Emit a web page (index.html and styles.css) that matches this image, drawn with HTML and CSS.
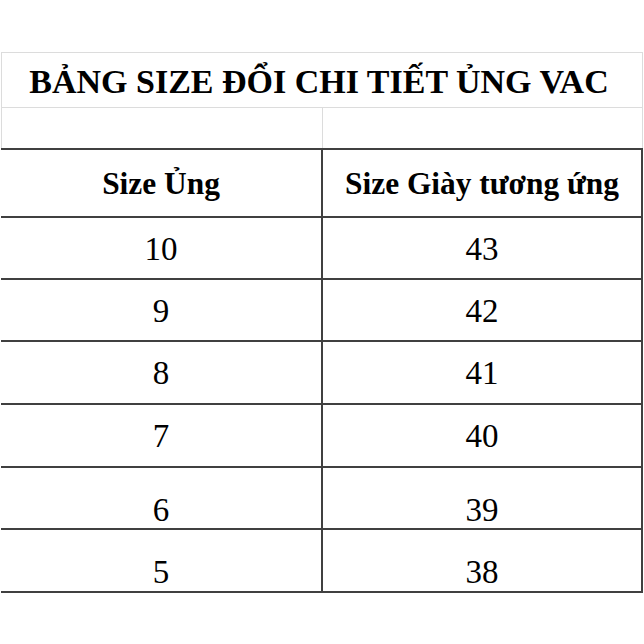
FILE: index.html
```html
<!DOCTYPE html>
<html lang="vi">
<head>
<meta charset="utf-8">
<title>Bảng size đổi chi tiết ủng VAC</title>
<link rel="stylesheet" href="styles.css">
</head>
<body>
<div class="sheet">
  <div class="title">BẢNG SIZE ĐỔI CHI TIẾT ỦNG VAC</div>
  <div class="blank"><div class="blank-cell"></div><div></div></div>
  <div class="row head h68"><div class="cell">Size Ủng</div><div class="cell">Size Giày tương ứng</div></div>
  <div class="row h62"><div class="cell">10</div><div class="cell">43</div></div>
  <div class="row h62"><div class="cell">9</div><div class="cell">42</div></div>
  <div class="row h63"><div class="cell">8</div><div class="cell">41</div></div>
  <div class="row h63"><div class="cell">7</div><div class="cell">40</div></div>
  <div class="row h62 low"><div class="cell">6</div><div class="cell">39</div></div>
  <div class="row h63 low last"><div class="cell">5</div><div class="cell">38</div></div>
</div>
</body>
</html>
```

FILE: styles.css
```css
* { box-sizing: border-box; }
html, body { margin: 0; padding: 0; background: #fff; }
body {
  font-family: "Liberation Serif", "Times New Roman", serif;
  color: #000;
  height: 644px;
  overflow: hidden;
}
.sheet {
  margin-top: 52px;
  margin-left: 1px;
  width: 642px;
}
.title {
  height: 56px;
  border: 1px solid #dcdcdc;
  display: flex;
  align-items: center;
  justify-content: center;
  font-weight: bold;
  font-size: 34px;
  padding-top: 4px;
  padding-right: 6px;
}
.blank {
  display: grid;
  grid-template-columns: 321px 1fr;
  height: 40px;
  border-left: 1px solid #dcdcdc;
  border-right: 1px solid #dcdcdc;
}
.blank-cell { border-right: 1px solid #dcdcdc; }
.row {
  display: grid;
  grid-template-columns: 322px 1fr;
  border-top: 2px solid #404040;
  border-right: 2px solid #404040;
}
.row .cell {
  display: flex;
  align-items: center;
  justify-content: center;
  font-size: 33px;
  padding-top: 2px;
}
.row .cell:first-child { border-right: 2px solid #404040; }
.head .cell {
  font-weight: bold;
  font-size: 31.4px;
  padding-top: 2px;
}
.h68 { height: 68px; }
.h62 { height: 62px; }
.h63 { height: 63px; }
.low .cell { padding-top: 24px; }
.last { border-bottom: 2px solid #404040; height: 65px; }
```
